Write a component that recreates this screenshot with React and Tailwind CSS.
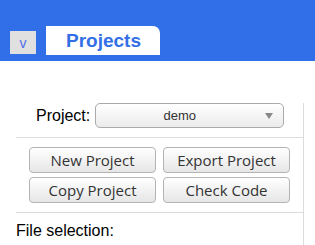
import React from "react";

const btn =
  "w-[127px] h-[26px] rounded-[4px] border border-[#b4b4b4] bg-gradient-to-b from-white to-[#e6e6e6] text-[15px] text-[#333] leading-none flex items-center justify-center";

export default function App() {
  return (
    <div className="w-[315px] h-[245px] overflow-hidden bg-white" style={{ fontFamily: '"Liberation Sans", Arial, sans-serif' }}>
      {/* Header with tabs */}
      <div className="h-[61px] bg-[#306fe8] flex items-end pb-[6px] pl-[10px]">
        <button className="w-[26px] h-[23px] mb-[1px] bg-[#e0e0e0] text-[#4f6ee6] text-[14px] leading-none flex items-center justify-center">
          v
        </button>
        <div className="ml-[10px] w-[114px] h-[29px] bg-white rounded-tr-[7px] flex items-center pl-[20px]">
          <span className="text-[19px] font-bold text-[#3370e6] leading-none">Projects</span>
        </div>
      </div>

      {/* Body */}
      <div className="pl-[16px] pt-[42px]">
        <div className="w-[288px] border-r border-[#dcdcdc] h-[200px]">
          {/* Project select */}
          <div className="flex items-center pl-[20px] pb-[9px] border-b border-[#dcdcdc]">
            <span className="text-[16px] text-black leading-none">Project:</span>
            <div className="ml-[5px] w-[189px] h-[25px] rounded-[5px] border border-[#aaa] bg-gradient-to-b from-white to-[#ebebeb] flex items-center relative">
              <span className="w-full text-center pr-[20px] text-[13px] text-[#333]">demo</span>
              <svg className="absolute right-[10px] top-[9px]" width="8" height="6" viewBox="0 0 8 6">
                <path d="M0 0H8L4 6Z" fill="#888" />
              </svg>
            </div>
          </div>

          {/* Actions */}
          <div className="pl-[13px] pt-[9px] pb-[9px] border-b border-[#dcdcdc] grid grid-cols-[127px_127px] gap-x-[7px] gap-y-[4px]" style={{ fontFamily: '"Open Sans", sans-serif' }}>
            <button className={btn}>New Project</button>
            <button className={btn}>Export Project</button>
            <button className={btn}>Copy Project</button>
            <button className={btn}>Check Code</button>
          </div>

          <div className="pt-[9px] text-[16px] text-black leading-[17px]">File selection:</div>
        </div>
      </div>
    </div>
  );
}
